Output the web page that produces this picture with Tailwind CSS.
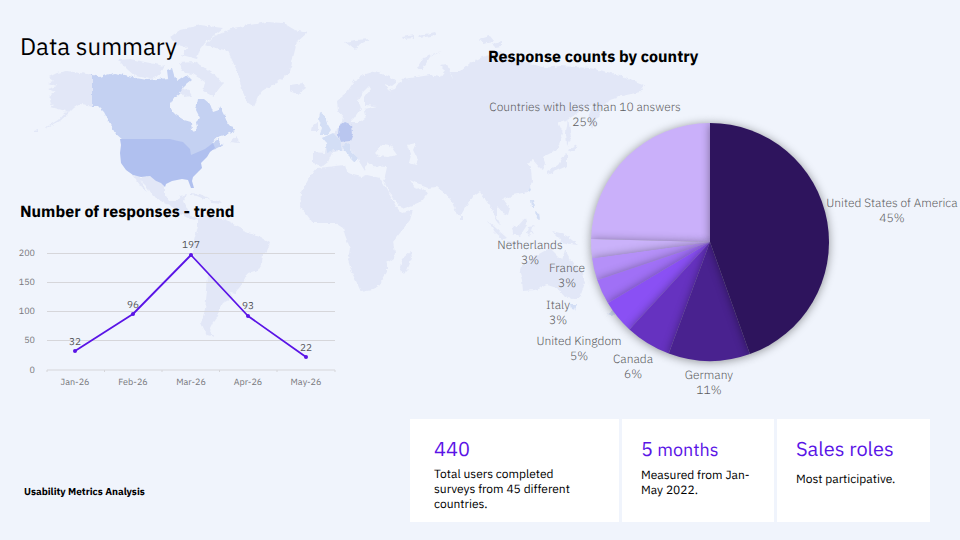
<!DOCTYPE html>
<html lang="en">
<head>
<meta charset="utf-8">
<meta name="viewport" content="width=device-width, initial-scale=1">
<title>Data summary</title>
<script src="https://cdn.jsdelivr.net/npm/@tailwindcss/browser@4"></script>
</head>
<body class="bg-[#f0f4fc] font-['IBM_Plex_Sans',Roboto,sans-serif] text-black [text-rendering:geometricPrecision]">
<main class="relative flex min-h-screen flex-col overflow-hidden">
  <!-- World map backdrop -->
  <svg class="absolute inset-x-0 top-0 w-full" viewBox="0 0 960 540" aria-hidden="true">
    <defs>
      <filter id="coast" x="0" y="0" width="960" height="540" filterUnits="userSpaceOnUse" color-interpolation-filters="sRGB">
        <feTurbulence type="fractalNoise" baseFrequency="0.22" numOctaves="2" seed="4" result="n"/>
        <feDisplacementMap in="SourceGraphic" in2="n" scale="4" xChannelSelector="R" yChannelSelector="G"/>
      </filter>
    </defs>
    <g fill="#e2e7f7" filter="url(#coast)">
      <path d="M94 75 80 73 67 71 57 73 49 77 54 81 48 83 57 86 47 89 56 92 49 96 52 99 50 103 54 105 51 107 62 110 70 112 74 108 80 104 94 106Z"/>
      <path d="M70 112 60 121 45 129 43 129 58 120 66 111ZM35 131l3-1 0 2-3 0Z"/>
      <path d="M170 37 180 30 200 25 223 28 213 36 205 43 200 50 197 59 182 55 188 47 176 45Z"/>
      <path d="M118 60 130 59 150 63 165 66 160 74 150 79 135 76 128 70Z"/>
      <path d="M178 63 195 62 205 68 215 75 223 84 218 90 214 97 203 91 205 82 193 74 185 73ZM180 90l8-1 4 7-7 1Z"/>
      <path d="M307 33 295 30 283 23 267 22 250 25 233 28 213 37 205 45 228 51 232 60 238 73 242 90 247 102 254 107 258 97 262 91 277 82 290 72 293 58 297 42Z"/>
      <path d="M290 85 303 83 306 88 298 94 290 91ZM230 142 237 136 239 143Z"/>
      <path d="M133 175 141 177 150 176 156 181 161 183 165 187 165 195 169 201 177 201 180 196 187 194 184 201 187 208 190 214 198 219 194 221 186 217 178 213 175 208 165 203 153 196 148 188 140 180 147 192 142 188Z"/>
      <path d="M190 193l10 1 10 5-6 0-7-3-7-1ZM210 200l8 1 3 3-9-1Z"/>
      <path d="M198 218 207 215 217 217 230 222 242 228 245 232 260 237 270 243 267 251 263 255 262 263 258 270 248 273 243 283 235 293 230 292 233 298 223 303 219 310 217 317 213 322 209 330 215 337 207 335 201 323 205 310 207 290 208 273 200 265 193 253 193 245 196 233 198 227Z"/>
      <path d="M317 168 327 167 345 165 347 172 353 175 362 177 367 175 380 178 387 190 397 208 402 213 413 210 410 220 400 233 393 242 395 253 394 258 387 263 387 272 383 277 380 285 372 290 361 292 357 283 352 273 348 260 350 248 345 235 343 228 335 223 313 223 307 215 300 207 301 193 308 180Z"/>
      <path d="M411 251 412 258 406 273 401 274 400 267 403 258Z"/>
      <path d="M337 100 347 92 355 80 365 74 375 71 390 77 397 82 392 86 385 84 388 91 395 89 402 79 417 77 430 75 440 77 445 70 440 65 447 64 453 80 451 72 460 72 470 63 482 57 500 52 520 60 545 68 560 66 590 68 620 75 645 85 640 92 622 96 610 100 603 107 592 128 588 118 592 106 585 108 567 120 558 122 563 133 557 150 543 157 545 163 543 170 540 168 533 160 527 163 531 168 532 182 527 192 513 195 507 198 503 199 510 208 508 215 503 213 497 206 497 217 501 226 497 222 492 210 487 202 480 192 473 197 465 208 460 217 457 215 452 202 447 195 437 187 428 188 420 185 410 180 416 189 421 188 428 193 422 201 413 205 402 209 392 197 383 180 385 176 387 167 372 166 367 162 365 171 360 163 357 157 349 148 341 150 332 153 328 162 323 166 313 163 313 152 325 153 327 143 322 138 333 134 341 124 343 117 338 111Z"/>
      <path d="M417 68 423 58 442 51 430 57 422 70ZM345 42 355 40 372 39 360 44 355 50ZM402 37l12-2 0 3-11 1ZM418 36l16-4 2 3-16 3ZM480 39l10-3 4 5-11 2ZM492 44l10-2 0 4-7 1Z"/>
      <path d="M312 125 318 122 318 131 311 131ZM460 217l3 0 0 4-3 0Z"/>
      <path d="M568 118 571 137 567 146 566 132ZM568 150 577 145 573 152ZM567 153 567 166 558 170 547 175 547 171 558 165 563 157Z"/>
      <path d="M488 221 497 229 507 238 503 239 495 232ZM512 227 518 226 525 218 527 225 520 236 513 233ZM507 241l13 2 0 2-13-2ZM552 231 560 233 567 236 578 245 570 244 562 242 558 237ZM528 227l7-1-4 3 3 5-4-2-1 5-2-5Z"/>
      <path d="M520 267 537 255 550 248 557 255 562 260 565 250 572 262 583 273 585 283 580 297 573 299 565 297 557 288 547 285 535 290 523 291 522 280 519 270Z"/>
    </g>
    <g fill="#d3def5" filter="url(#coast)">
      <path d="M320 112 324 115 327 123 331 130 328 134 320 134 322 128 319 120ZM322 138 333 133 340 140 342 150 334 150 327 153 326 143Z"/>
      <path d="M342 145 350 143 350 150 358 158 355 162 345 152ZM531 200l3 0 1 7-3 0ZM535 211l4 2 1 6-4-2ZM571 304l6 0-2 6-3-1ZM607 315l8-6 3 2-6 5ZM528 190l2-4 1 4-2 2Z"/>
    </g>
    <g fill="#f0f4fc" filter="url(#coast)">
      <path d="M375 153 383 144 390 145 397 155 388 157 378 156ZM407 145 416 143 413 150 418 160 416 165 409 163 411 155ZM369 86 363 92 358 100 361 108 354 118 350 122 360 122 366 117 365 109 377 106 364 105 364 98 371 89Z"/>
    </g>
    <g filter="url(#coast)">
      <path fill="#c4d1f2" d="M92 75 100 77 106 75 114 73 125 75 136 78 147 80 158 79 168 78 167 70 172 68 174 75 178 81 187 75 192 80 187 84 183 88 180 93 175 97 170 105 170 109 176 115 184 120 191 122 192 130 194 132 197 128 196 122 200 118 196 110 198 99 204 99 210 104 213 112 219 110 220 107 224 115 228 124 234 128 235 131 228 134 218 137 211 143 219 139 220 144 224 145 216 149 190 156 124 141 115 133 108 120 104 112 98 106 92 106Z"/>
      <path fill="#b9c6ef" d="M339 126 345 122 352 125 353 134 350 141 341 142 338 134Z"/>
    </g>
    <path fill="#b0c0ef" d="M120 139 170 139 178 141 183 142 190 149 191 155 205 149 213 143 215 148 210 152 207 157 203 161 201 163 202 168 199 171 193 177 192 181 194 188 191 188 188 180 182 179 172 181 166 184 165 187 161 183 156 181 150 176 141 177 133 175 126 170 121 163 120 153 121 145Z"/>
  </svg>

  <div class="relative grid grid-cols-2">
    <section aria-labelledby="trend">
      <h1 class="pt-[30px] pl-5 text-2xl leading-8">Data summary</h1>
      <h2 id="trend" class="mt-[138px] pl-5 text-base leading-6 font-bold">Number of responses - trend</h2>
      <svg class="mt-2 w-3/4 text-[9px]" viewBox="0 232 360 160" role="img" aria-label="Line chart of responses per month">
        <g stroke="#d6d6da" stroke-width="1">
          <path d="M47 253.5H335M47 282.5H335M47 311.5H335M47 340.5H335M47 370H335"/>
          <path d="M47 370v2M104.500 370v2M162 370v2M219.500 370v2M277 370v2M335 370v2" />
        </g>
        <g fill="#77777b" text-anchor="end">
          <text x="35" y="256">200</text><text x="35" y="285">150</text><text x="35" y="314">100</text><text x="35" y="343">50</text><text x="35" y="373">0</text>
        </g>
        <g fill="#77777b" text-anchor="middle">
          <text x="75" y="385">Jan-26</text><text x="133" y="385">Feb-26</text><text x="191" y="385">Mar-26</text><text x="248" y="385">Apr-26</text><text x="306" y="385">May-26</text>
        </g>
        <path d="M75 351 133 314 191 255 248 316 306 357" fill="none" stroke="#5a14e6" stroke-width="1.800" stroke-linejoin="round"/>
        <g fill="#5a14e6"><circle cx="75" cy="351" r="2"/><circle cx="133" cy="314" r="2"/><circle cx="191" cy="255" r="2"/><circle cx="248" cy="316" r="2"/><circle cx="306" cy="357" r="2"/></g>
        <g fill="#56565a" text-anchor="middle" class="text-[10px]">
          <text x="75" y="345">32</text><text x="133" y="308">96</text><text x="191" y="248">197</text><text x="248" y="309">93</text><text x="306" y="351">22</text>
        </g>
      </svg>
    </section>

    <section aria-labelledby="countries">
      <h2 id="countries" class="pt-[45px] pl-2 text-base leading-6 font-bold">Response counts by country</h2>
      <svg class="mt-[21px] w-full overflow-visible text-xs" viewBox="480 90 480 310" role="img" aria-label="Pie chart of responses by country">
        <defs>
          <filter id="shade" x="560" y="92" width="300" height="300" filterUnits="userSpaceOnUse" color-interpolation-filters="sRGB">
            <feDropShadow dx="0" dy="1" stdDeviation="5" flood-color="#000" flood-opacity="0.4"/>
          </filter>
        </defs>
        <g id="slices"></g>
        <g fill="#5c5c60" text-anchor="middle" class="font-light">
          <text x="585" y="111">Countries with less than 10 answers</text><text x="585" y="126">25%</text>
          <text x="892" y="207">United States of America</text><text x="892" y="222">45%</text>
          <text x="530" y="249">Netherlands</text><text x="530" y="264">3%</text>
          <text x="567" y="272">France</text><text x="567" y="287">3%</text>
          <text x="558" y="309">Italy</text><text x="558" y="324">3%</text>
          <text x="579" y="345">United Kingdom</text><text x="579" y="360">5%</text>
          <text x="633" y="363">Canada</text><text x="633" y="378">6%</text>
          <text x="709" y="379">Germany</text><text x="709" y="394">11%</text>
        </g>
      </svg>
    </section>
  </div>

  <footer class="relative mt-[19px] mr-[30px] flex items-stretch pb-[18px]">
    <p class="flex-1 pt-16 pl-6 text-[10px] leading-[18px] font-bold">Usability Metrics Analysis</p>
    <div class="grid w-[520px] grid-cols-[209fr_152fr_153fr] gap-[3px] text-xs leading-[15px]">
      <section class="bg-white pt-[18px] pr-8 pb-[10px] pl-6">
        <h3 class="text-xl leading-6 text-[#5a14e6]">440</h3>
        <p class="mt-1.5">Total users completed surveys from 45 different countries.</p>
      </section>
      <section class="bg-white pt-[18px] pr-4 pb-[10px] pl-[19px]">
        <h3 class="text-lg leading-6 text-[#5a14e6]"><span class="text-xl leading-6">5</span> months</h3>
        <p class="mt-1.5">Measured from Jan-May 2022.</p>
      </section>
      <section class="bg-white pt-[18px] pr-4 pb-[10px] pl-[19px]">
        <h3 class="text-xl leading-6 text-[#5a14e6]">Sales roles</h3>
        <p class="mt-[11px]">Most participative.</p>
      </section>
    </div>
  </footer>
</main>
<script>
  // Slice boundaries in degrees, clockwise from the top; later slices are painted first
  const slices = [
    [0, 160.4, '#2e145d'], [160.4, 200.3, '#49228f'], [200.3, 222.6, '#6632c0'], [222.6, 239.1, '#8a50f4'],
    [239.1, 251.4, '#a070f6'], [251.4, 262.2, '#b590f8'], [262.2, 271.4, '#cab2fa'], [271.4, 360, '#cab0fa']
  ];
  const pt = a => (710 + 119 * Math.sin(a * Math.PI / 180)) + ' ' + (242 - 119 * Math.cos(a * Math.PI / 180));
  document.getElementById('slices').innerHTML = slices.reverse().map(([a, b, c]) =>
    `<path filter="url(#shade)" fill="${c}" d="M710 242L${pt(a)}A119 119 0 0 1 ${pt(b)}Z"/>`).join('');
</script>
</body>
</html>
